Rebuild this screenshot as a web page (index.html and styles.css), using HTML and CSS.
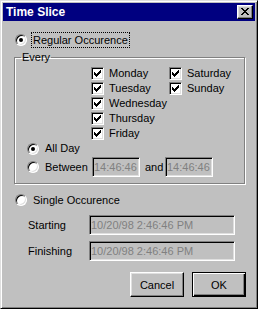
FILE: index.html
```html
<!DOCTYPE html>
<html lang="en">
  <head>
    <meta charset="UTF-8" />
    <meta name="viewport" content="width=device-width, initial-scale=1.0" />
    <title>Time Slice</title>
    <link rel="stylesheet" href="styles.css">
  </head>
  <body>
    <div class="window">
      <div class="titlebar">
        <span class="title">Time Slice</span>
        <button class="close" type="button" aria-label="Close">
          <svg width="8" height="7" viewBox="0 0 8 7"><path d="M0 0h2v1h-2zM6 0h2v1h-2zM1 1h2v1h-2zM5 1h2v1h-2zM2 2h4v1h-4zM3 3h2v1h-2zM2 4h4v1h-4zM1 5h2v1h-2zM5 5h2v1h-2zM0 6h2v1h-2zM6 6h2v1h-2z" fill="#000"/></svg>
        </button>
      </div>

      <form class="content">
        <label class="option option-main">
          <span class="radio checked"></span>
          <span class="focus">Regular Occurence</span>
        </label>

        <fieldset class="group">
          <legend>Every</legend>
          <div class="days">
            <label class="day"><span class="check"><svg width="11" height="11" viewBox="0 0 11 11"><path d="M8 2h1v1h-1zM7 3h2v1h-2zM2 4h1v1h-1zM6 4h3v1h-3zM2 5h2v1h-2zM5 5h3v1h-3zM2 6h5v1h-5zM3 7h3v1h-3zM4 8h1v1h-1z" fill="#000"/></svg></span>Monday</label>
            <label class="day"><span class="check"><svg width="11" height="11" viewBox="0 0 11 11"><path d="M8 2h1v1h-1zM7 3h2v1h-2zM2 4h1v1h-1zM6 4h3v1h-3zM2 5h2v1h-2zM5 5h3v1h-3zM2 6h5v1h-5zM3 7h3v1h-3zM4 8h1v1h-1z" fill="#000"/></svg></span>Tuesday</label>
            <label class="day"><span class="check"><svg width="11" height="11" viewBox="0 0 11 11"><path d="M8 2h1v1h-1zM7 3h2v1h-2zM2 4h1v1h-1zM6 4h3v1h-3zM2 5h2v1h-2zM5 5h3v1h-3zM2 6h5v1h-5zM3 7h3v1h-3zM4 8h1v1h-1z" fill="#000"/></svg></span>Wednesday</label>
            <label class="day"><span class="check"><svg width="11" height="11" viewBox="0 0 11 11"><path d="M8 2h1v1h-1zM7 3h2v1h-2zM2 4h1v1h-1zM6 4h3v1h-3zM2 5h2v1h-2zM5 5h3v1h-3zM2 6h5v1h-5zM3 7h3v1h-3zM4 8h1v1h-1z" fill="#000"/></svg></span>Thursday</label>
            <label class="day"><span class="check"><svg width="11" height="11" viewBox="0 0 11 11"><path d="M8 2h1v1h-1zM7 3h2v1h-2zM2 4h1v1h-1zM6 4h3v1h-3zM2 5h2v1h-2zM5 5h3v1h-3zM2 6h5v1h-5zM3 7h3v1h-3zM4 8h1v1h-1z" fill="#000"/></svg></span>Friday</label>
            <label class="day"><span class="check"><svg width="11" height="11" viewBox="0 0 11 11"><path d="M8 2h1v1h-1zM7 3h2v1h-2zM2 4h1v1h-1zM6 4h3v1h-3zM2 5h2v1h-2zM5 5h3v1h-3zM2 6h5v1h-5zM3 7h3v1h-3zM4 8h1v1h-1z" fill="#000"/></svg></span>Saturday</label>
            <label class="day"><span class="check"><svg width="11" height="11" viewBox="0 0 11 11"><path d="M8 2h1v1h-1zM7 3h2v1h-2zM2 4h1v1h-1zM6 4h3v1h-3zM2 5h2v1h-2zM5 5h3v1h-3zM2 6h5v1h-5zM3 7h3v1h-3zM4 8h1v1h-1z" fill="#000"/></svg></span>Sunday</label>
          </div>

          <label class="option option-sub">
            <span class="radio checked"></span>
            <span>All Day</span>
          </label>
          <div class="option option-sub between">
            <span class="radio"></span>
            <span class="between-label">Between</span>
            <input class="field time" type="text" value="14:46:46" disabled />
            <span class="and">and</span>
            <input class="field time" type="text" value="14:46:46" disabled />
          </div>
        </fieldset>

        <label class="option option-single">
          <span class="radio"></span>
          <span>Single Occurence</span>
        </label>

        <div class="field-row first">
          <span class="field-label">Starting</span>
          <input class="field date" type="text" value="10/20/98 2:46:46 PM" disabled />
        </div>
        <div class="field-row">
          <span class="field-label">Finishing</span>
          <input class="field date" type="text" value="10/20/98 2:46:46 PM" disabled />
        </div>

        <div class="actions">
          <button class="btn" type="button">Cancel</button>
          <button class="btn btn-default" type="submit">OK</button>
        </div>
      </form>
    </div>
  </body>
</html>
```

FILE: styles.css
```css
body {
  margin: 0;
  font-family: "Liberation Sans", Arial, sans-serif;
  font-size: 11px;
  line-height: 13px;
  color: #000;
  background: #c0c0c0;
}

.window {
  width: 258px;
  height: 309px;
  box-sizing: border-box;
  background: #c0c0c0;
  border: 1px solid;
  border-color: #dfdfdf #000 #000 #dfdfdf;
  box-shadow: inset 1px 1px #fff, inset -1px -1px #808080;
  padding: 2px;
}

.titlebar {
  height: 18px;
  background: #000080;
  display: flex;
  align-items: center;
  justify-content: space-between;
  padding: 0 2px 0 3px;
}

.title {
  color: #fff;
  font-weight: bold;
  font-size: 12px;
}

.close {
  width: 16px;
  height: 14px;
  box-sizing: border-box;
  padding: 0;
  background: #c0c0c0;
  border: 1px solid;
  border-color: #fff #000 #000 #fff;
  box-shadow: inset -1px -1px #808080, inset 1px 1px #dfdfdf;
  display: flex;
  align-items: center;
  justify-content: center;
}

.close svg {
  display: block;
  margin: -1px 0 0 -1px;
}

.content {
  display: flex;
  flex-direction: column;
  padding: 11px 9px 0 11px;
  margin: 0;
}

/* radios and checkboxes */
.option {
  display: flex;
  align-items: center;
}

.radio {
  position: relative;
  flex: none;
  width: 12px;
  height: 12px;
  box-sizing: border-box;
  border-radius: 50%;
  border: 1px solid;
  border-color: #808080 #fff #fff #808080;
  box-shadow: inset 1px 1px #000, inset -1px -1px #dfdfdf;
  background: #fff;
  margin-right: 6px;
}

.radio.checked::after {
  content: "";
  position: absolute;
  left: 3px;
  top: 3px;
  width: 4px;
  height: 4px;
  border-radius: 50%;
  background: #000;
}

.option-main {
  height: 16px;
  margin-left: 1px;
}

.option-main .radio {
  margin-right: 4px;
}

.focus {
  border: 1px dotted #000;
  padding: 0 1px;
  line-height: 14px;
}

.check {
  flex: none;
  width: 13px;
  height: 13px;
  box-sizing: border-box;
  border: 1px solid;
  border-color: #808080 #fff #fff #808080;
  box-shadow: inset 1px 1px #000, inset -1px -1px #dfdfdf;
  background: #fff;
}

.check svg {
  display: block;
}

/* group box */
.group {
  margin: 3px 1px 0 0;
  padding: 2px 0 6px;
  border: 1px solid #808080;
  box-shadow: 1px 1px #fff, inset 1px 1px #fff;
  min-width: 0;
}

.group legend {
  margin-left: 6px;
  padding: 0 1px;
  line-height: 13px;
}

.days {
  display: grid;
  grid-template-columns: 78px auto;
  grid-template-rows: repeat(5, 15px);
  grid-auto-flow: column;
  padding-left: 76px;
}

.day {
  display: flex;
  align-items: center;
  gap: 5px;
}

.option-sub {
  height: 15px;
  padding-left: 12px;
}

.between {
  height: 20px;
  margin-top: 1px;
}

.between-label {
  width: 47px;
}

.and {
  width: 25px;
  box-sizing: border-box;
  padding-left: 5px;
}

/* text fields */
.field {
  height: 20px;
  box-sizing: border-box;
  margin: 0;
  padding: 0 0 0 1px;
  font-family: "Liberation Sans", Arial, sans-serif;
  font-size: 11px;
  color: #808080;
  background: #c0c0c0;
  border: 1px solid;
  border-color: #808080 #fff #fff #808080;
  box-shadow: inset 1px 1px #000, inset -1px -1px #dfdfdf;
  outline: none;
}

.time {
  width: 48px;
}

.date {
  width: 146px;
}

.option-single {
  height: 16px;
  margin-top: 8px;
  margin-left: 1px;
}

.field-row {
  display: flex;
  align-items: center;
  height: 20px;
  padding-left: 14px;
  margin-top: 6px;
}

.field-row.first {
  margin-top: 7px;
}

.field-label {
  width: 61px;
}

/* buttons */
.actions {
  display: flex;
  justify-content: flex-end;
  gap: 8px;
  margin-top: 11px;
}

.btn {
  width: 54px;
  height: 25px;
  box-sizing: border-box;
  padding: 0;
  font-family: "Liberation Sans", Arial, sans-serif;
  font-size: 11px;
  color: #000;
  background: #c0c0c0;
  border: 1px solid;
  border-color: #fff #000 #000 #fff;
  box-shadow: inset -1px -1px #808080, inset 1px 1px #dfdfdf;
}

.btn-default {
  border: 1px solid #000;
  box-shadow: inset 1px 1px #fff, inset -1px -1px #000, inset -2px -2px #808080;
}
```
